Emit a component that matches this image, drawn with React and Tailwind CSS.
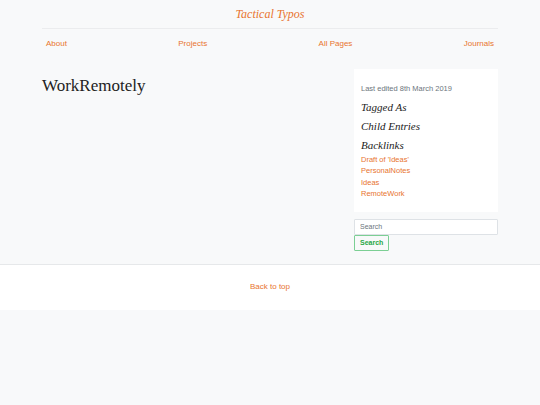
import React from 'react';

const orange = 'text-[#e8742f]';

const NavLink = ({ children }) => (
  <a href="#" className={`${orange} text-[8px]`}>{children}</a>
);

const SidebarLink = ({ children }) => (
  <a href="#" className={`${orange} block text-[7.5px] leading-[11.4px]`}>{children}</a>
);

const App = () => {
  return (
    <div className="min-h-[405px] bg-[#f8f9fa] font-['Liberation_Sans',sans-serif]">
      {/* Header */}
      <header className="mx-[42px] pt-[6px]">
        <div className="text-center pb-[6px] border-b border-[#ebecee] text-[12px] leading-[16px]">
          <a href="#" className={`${orange} font-['Liberation_Serif',serif] italic`}>
            Tactical Typos
          </a>
        </div>
        <nav className="flex justify-between px-[4px] pt-[9px] text-[8px] leading-[12px]">
          <NavLink>About</NavLink>
          <NavLink>Projects</NavLink>
          <NavLink>All Pages</NavLink>
          <NavLink>Journals</NavLink>
        </nav>
      </header>

      {/* Main */}
      <main className="mx-[42px] mt-[19px] flex justify-between pb-[13px]">
        <div>
          <h1 className="font-['Liberation_Serif',serif] text-[17px] leading-[22px] text-[#222] mt-[6px]">
            WorkRemotely
          </h1>
        </div>
        <aside className="w-[144px]">
          <div className="bg-white px-[7px] pt-[15px] pb-[12px]">
            <p className="text-[7.5px] leading-[10px] text-[#6c757d]">Last edited 8th March 2019</p>
            <h3 className="font-['Liberation_Serif',serif] italic text-[11px] leading-[13px] text-[#222] mt-[7px]">Tagged As</h3>
            <h3 className="font-['Liberation_Serif',serif] italic text-[11px] leading-[13px] text-[#222] mt-[6px]">Child Entries</h3>
            <h3 className="font-['Liberation_Serif',serif] italic text-[11px] leading-[13px] text-[#222] mt-[6px]">Backlinks</h3>
            <div className="mt-[2px]">
              <SidebarLink>Draft of 'Ideas'</SidebarLink>
              <SidebarLink>PersonalNotes</SidebarLink>
              <SidebarLink>Ideas</SidebarLink>
              <SidebarLink>RemoteWork</SidebarLink>
            </div>
          </div>
          <div className="mt-[7px]">
            <input
              type="text"
              placeholder="Search"
              className="block w-full h-[16px] bg-white border border-[#dee2e6] rounded-[1px] px-[5px] text-[7px] placeholder:text-[#6c757d] outline-none"
            />
            <button className="block h-[16px] px-[5px] border border-[#7ccf94] rounded-[1px] text-[#28a745] font-bold text-[7px] leading-[14px] bg-transparent">
              Search
            </button>
          </div>
        </aside>
      </main>

      {/* Footer */}
      <footer className="bg-white border-t border-[#e6e8ea] h-[46px] flex items-center justify-center">
        <a href="#" className={`${orange} text-[8px]`}>Back to top</a>
      </footer>
    </div>
  );
};

export default App;
